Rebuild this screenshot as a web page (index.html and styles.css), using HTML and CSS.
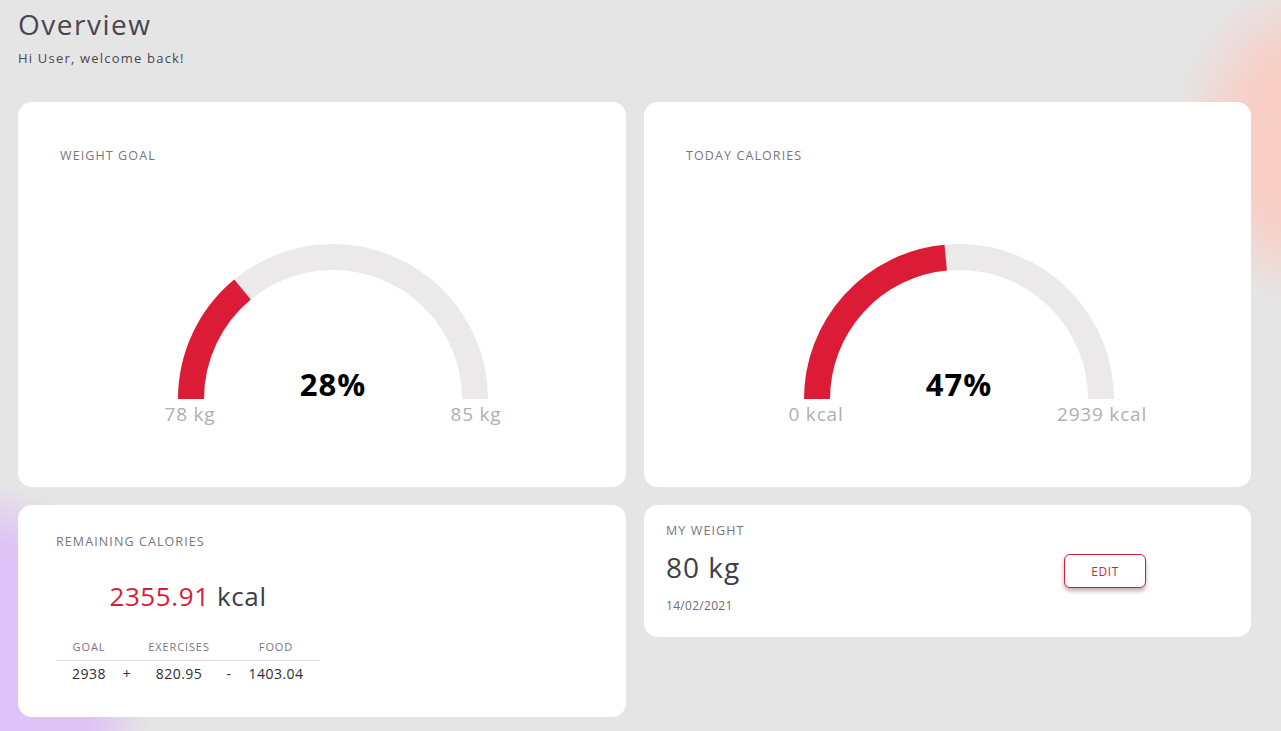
FILE: index.html
```html
<!DOCTYPE html>
<html lang="en">
<head>
<meta charset="utf-8">
<title>Overview</title>
<link rel="stylesheet" href="styles.css">
</head>
<body>
<main class="page">
  <header class="head">
    <h1 class="title">Overview</h1>
    <p class="subtitle">Hi User, welcome back!</p>
  </header>
  <section class="grid">
    <article class="card card-gauge">
      <h2 class="card-title">WEIGHT GOAL</h2>
      <svg class="gauge" width="400" height="190" viewBox="0 0 400 190">
        <path class="track" d="M 58 160 A 142 142 0 0 1 342 160"/>
        <path class="fill" d="M 58 160 A 142 142 0 0 1 109.5 50.6"/>
        <text class="pct" x="200" y="157">28%</text>
        <text class="lbl" x="57" y="182">78 kg</text>
        <text class="lbl" x="343" y="182">85 kg</text>
      </svg>
    </article>
    <article class="card card-gauge">
      <h2 class="card-title">TODAY CALORIES</h2>
      <svg class="gauge" width="400" height="190" viewBox="0 0 400 190">
        <path class="track" d="M 58 160 A 142 142 0 0 1 342 160"/>
        <path class="fill" d="M 58 160 A 142 142 0 0 1 186.7 18.6"/>
        <text class="pct" x="200" y="157">47%</text>
        <text class="lbl" x="57" y="182">0 kcal</text>
        <text class="lbl" x="343" y="182">2939 kcal</text>
      </svg>
    </article>
    <article class="card card-remain">
      <h2 class="card-title">REMAINING CALORIES</h2>
      <div class="remain-body">
        <p class="remain-amount"><span class="red">2355.91</span> kcal</p>
        <div class="calc">
          <span class="calc-h">GOAL</span><span class="calc-e"></span><span class="calc-h">EXERCISES</span><span class="calc-e"></span><span class="calc-h">FOOD</span>
          <span class="calc-v">2938</span><span class="calc-op">+</span><span class="calc-v">820.95</span><span class="calc-op">-</span><span class="calc-v">1403.04</span>
        </div>
      </div>
    </article>
    <article class="card card-weight">
      <div class="weight-info">
        <h2 class="card-title">MY WEIGHT</h2>
        <p class="weight-value">80 kg</p>
        <p class="weight-date">14/02/2021</p>
      </div>
      <button class="btn-edit" type="button">EDIT</button>
    </article>
  </section>
</main>
</body>
</html>
```
FILE: styles.css
```css
* { box-sizing: border-box; }
html, body { margin: 0; height: 100%; }
body {
  font-family: "Open Sans", "Liberation Sans", sans-serif;
  color: #3f3d48;
  background:
    radial-gradient(circle at 1345px 140px, #f7cfc6 0, #f7cfc6 105px, rgba(247,207,198,0) 175px),
    radial-gradient(circle at -50px 680px, #dfc2f6 0, #dfc2f6 145px, rgba(223,194,246,0) 205px),
    #e5e5e5;
  overflow: hidden;
}
.page { padding: 7px 30px 0 18px; }
.head { margin-bottom: 35px; }
.title {
  margin: 0;
  font-size: 28px;
  line-height: 34px;
  font-weight: 400;
  color: #4a4650;
  letter-spacing: 1.5px;
}
.subtitle {
  margin: 8px 0 0;
  font-size: 13px;
  line-height: 18px;
  color: #4a4650;
  letter-spacing: 1.2px;
}
.grid {
  display: grid;
  grid-template-columns: 608px 607px;
  grid-template-rows: 385px auto;
  gap: 18px;
  align-items: start;
}
.card {
  background: #fff;
  border-radius: 14px;
}
.card-title {
  margin: 0;
  font-size: 12.5px;
  line-height: 14px;
  font-weight: 400;
  color: #7a7480;
  letter-spacing: 1.1px;
}
.card-gauge {
  height: 385px;
  padding: 47px 42px 0;
}
.gauge {
  display: block;
  margin: 76px 0 0 73px;
  overflow: visible;
}
.track, .fill { fill: none; stroke-width: 26; }
.track { stroke: #ece9ea; }
.fill { stroke: #dc1c37; }
.pct {
  font-family: "Open Sans", "Liberation Sans", sans-serif;
  font-weight: 700;
  font-size: 31px;
  letter-spacing: 1px;
  fill: #000;
  text-anchor: middle;
}
.lbl {
  font-family: "Open Sans", "Liberation Sans", sans-serif;
  font-size: 19px;
  letter-spacing: 0.8px;
  fill: #b3aeae;
  text-anchor: middle;
}
.card-remain {
  height: 212px;
  padding: 30px 38px 0;
}
.remain-body { width: 264px; }
.remain-amount {
  margin: 31px 0 0;
  text-align: center;
  font-size: 26px;
  line-height: 32px;
  letter-spacing: 0.6px;
  color: #3f3d48;
}
.red { color: #dc1c37; }
.calc {
  margin-top: 22px;
  display: grid;
  grid-template-columns: 66px 10px 94px 6px 88px;
  grid-template-rows: 27px 26px;
}
.calc > span { text-align: center; }
.calc-h, .calc-e {
  font-size: 11px;
  line-height: 26px;
  color: #7a7480;
  letter-spacing: 0.9px;
  border-bottom: 1px solid #e0e0e0;
}
.calc-v, .calc-op {
  font-size: 14px;
  line-height: 26px;
  letter-spacing: 0.5px;
  color: #2f2d36;
}
.card-weight {
  padding: 19px 105px 23px 22px;
  display: flex;
  justify-content: space-between;
  align-items: center;
}
.weight-info { display: flex; flex-direction: column; }
.weight-value {
  margin: 12px 0 0;
  font-size: 28px;
  line-height: 34px;
  letter-spacing: 1px;
  color: #3f3d48;
}
.weight-date {
  margin: 14px 0 0;
  font-size: 12px;
  line-height: 16px;
  letter-spacing: 0.3px;
  color: #6f6a74;
}
.btn-edit {
  margin-top: 4px;
  width: 82px;
  height: 34px;
  background: #fff;
  border: 1px solid #dc1c37;
  border-radius: 6px;
  color: #dc1c37;
  font-family: inherit;
  font-size: 12px;
  letter-spacing: 0.6px;
  box-shadow: 0 3px 4px rgba(80, 20, 30, 0.35);
  cursor: pointer;
}
```
